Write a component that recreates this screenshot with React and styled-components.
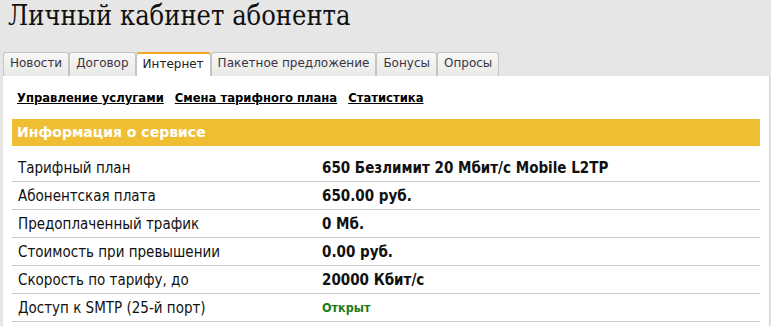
import React from 'react';
import styled, { createGlobalStyle } from 'styled-components';

const GlobalStyle = createGlobalStyle`
    body {
        margin: 0;
        background: #e6e6e6;
        font-family: "DejaVu Sans", Verdana, sans-serif;
    }
`;

const Page = styled.div`
    width: 771px;
    height: 326px;
    overflow: hidden;
`;

const Title = styled.h1`
    margin: 0;
    padding: 0 0 0 8px;
    height: 52px;
    font-family: "DejaVu Serif Condensed", "DejaVu Serif", serif;
    font-weight: normal;
    font-size: 27px;
    line-height: 32px;
    color: #111;
`;

const Tabs = styled.div`
    display: flex;
    padding-left: 3px;
    height: 24px;
`;

const Tab = styled.div`
    box-sizing: border-box;
    height: 24px;
    padding: 0 6px;
    font-size: 12px;
    line-height: 21px;
    color: ${(p) => (p.active ? '#222' : '#3a3346')};
    border: 1px solid #c4c4c4;
    border-bottom: none;
    border-top: ${(p) => (p.active ? '2px solid #f5a623' : '1px solid #c4c4c4')};
    border-radius: 3px 3px 0 0;
    background: ${(p) =>
        p.active ? '#fff' : 'linear-gradient(#f7f7f5, #e9e9e6)'};
    white-space: nowrap;
`;

const Panel = styled.div`
    margin: 0 1px 0 3px;
    background: #fff;
    border-right: 1px solid #d4d4d4;
    height: 250px;
    padding: 14px 9px 0 9px;
`;

const Links = styled.div`
    display: flex;
    gap: 11px;
    padding-left: 5px;
    height: 29px;
`;

const Link = styled.a`
    font-size: 11.6px;
    font-weight: bold;
    color: #000;
    text-decoration: underline;
    line-height: 16px;
`;

const Header = styled.div`
    background: #f0be32;
    color: #fff;
    font-weight: bold;
    font-size: 14px;
    height: 27px;
    line-height: 27px;
    padding-left: 5px;
    margin-bottom: 8px;
`;

const Row = styled.div`
    display: grid;
    grid-template-columns: 304px 1fr;
    height: 28px;
    align-items: center;
    border-bottom: 1px solid #c9c9c9;
    box-sizing: border-box;
    padding-left: 6px;
`;

const Label = styled.span`
    font-family: "DejaVu Sans Condensed", "DejaVu Sans", sans-serif;
    font-size: 15px;
    color: #111;
`;

const Value = styled.span`
    font-family: "DejaVu Sans Condensed", "DejaVu Sans", sans-serif;
    font-weight: bold;
    font-size: ${(p) => (p.green ? '12.5px' : '15px')};
    color: ${(p) => (p.green ? '#1f7a12' : '#111')};
`;

const rows = [
    ['Тарифный план', '650 Безлимит 20 Мбит/с Mobile L2TP'],
    ['Абонентская плата', '650.00 руб.'],
    ['Предоплаченный трафик', '0 Мб.'],
    ['Стоимость при превышении', '0.00 руб.'],
    ['Скорость по тарифу, до', '20000 Кбит/с'],
    ['Доступ к SMTP (25-й порт)', 'Открыт', true],
];

const tabs = ['Новости', 'Договор', 'Интернет', 'Пакетное предложение', 'Бонусы', 'Опросы'];

export default function App() {
    return (
        <Page>
            <GlobalStyle />
            <Title>Личный кабинет абонента</Title>
            <Tabs>
                {tabs.map((t) => (
                    <Tab key={t} active={t === 'Интернет'}>
                        {t}
                    </Tab>
                ))}
            </Tabs>
            <Panel>
                <Links>
                    <Link href="#">Управление услугами</Link>
                    <Link href="#">Смена тарифного плана</Link>
                    <Link href="#">Статистика</Link>
                </Links>
                <Header>Информация о сервисе</Header>
                {rows.map(([l, v, g]) => (
                    <Row key={l}>
                        <Label>{l}</Label>
                        <Value green={g}>{v}</Value>
                    </Row>
                ))}
            </Panel>
        </Page>
    );
}
